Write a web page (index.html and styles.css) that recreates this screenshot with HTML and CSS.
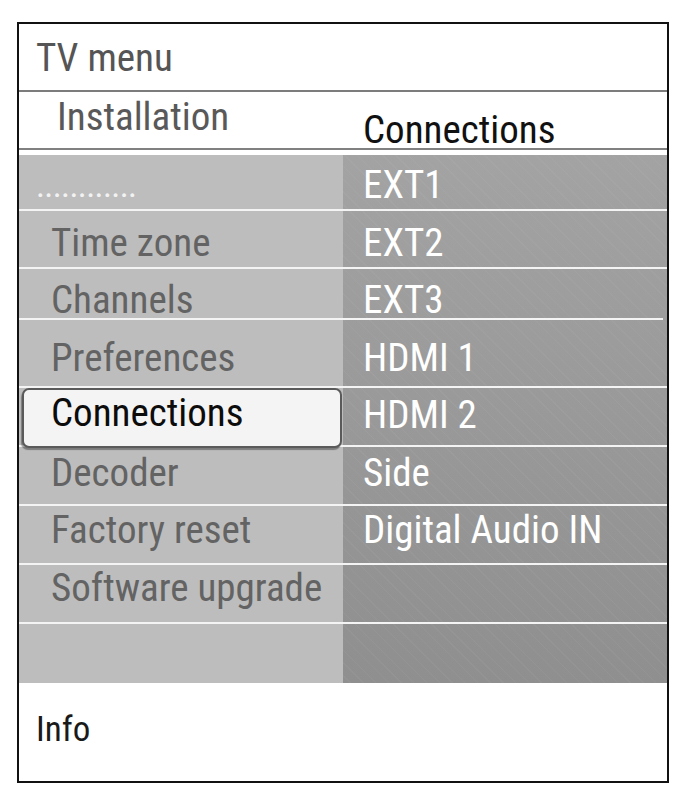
FILE: index.html
```html
<!DOCTYPE html>
<html lang="en">
<head>
    <meta charset="UTF-8" />
    <title>TV menu - Installation</title>
    <link rel="stylesheet" href="styles.css">
</head>
<body>

    <div class="tv-panel">
        <div class="menu-title">TV menu</div>

        <div class="crumbs">
            <span class="crumb-parent">Installation</span>
            <span class="crumb-current">Connections</span>
        </div>

        <div class="menu-list">
            <!-- separator lines, drawn behind the items -->
            <div class="lines">
                <div class="line-row"></div>
                <div class="line-row"></div>
                <div class="line-row short"></div>
                <div class="line-row"></div>
                <div class="line-row"></div>
                <div class="line-row"></div>
                <div class="line-row"></div>
                <div class="line-row"></div>
                <div class="line-row last"></div>
            </div>

            <div class="items">
                <div class="item-left dots">............</div>
                <div class="item-right">EXT1</div>

                <div class="item-left">Time zone</div>
                <div class="item-right">EXT2</div>

                <div class="item-left">Channels</div>
                <div class="item-right">EXT3</div>

                <div class="item-left">Preferences</div>
                <div class="item-right">HDMI 1</div>

                <div class="item-left selected">Connections</div>
                <div class="item-right">HDMI 2</div>

                <div class="item-left">Decoder</div>
                <div class="item-right">Side</div>

                <div class="item-left">Factory reset</div>
                <div class="item-right">Digital Audio IN</div>

                <div class="item-left">Software upgrade</div>
                <div class="item-right"></div>
            </div>
        </div>

        <div class="info">Info</div>
    </div>

</body>
</html>
```
FILE: styles.css
```css
* {
    margin: 0;
    padding: 0;
    box-sizing: border-box;
    font-family: 'Roboto Condensed', 'Roboto', sans-serif;
    font-stretch: condensed;
}
body {
    background: #ffffff;
    color: #111;
}

/* Outer frame */
.tv-panel {
    margin: 22px 0 0 17px;
    width: 652px;
    height: 761px;
    border: 2px solid #111;
    background: #fff;
    display: flex;
    flex-direction: column;
}

/* Header */
.menu-title {
    height: 68px;
    padding: 6px 0 0 17px;
    font-size: 39px;
    line-height: 57.5px;
    color: #555;
    border-bottom: 2px solid #7c7c7c;
}
.crumbs {
    height: 58px;
    display: flex;
    border-bottom: 2px solid #808080;
    margin-bottom: 5px;
    font-size: 39px;
    line-height: 50px;
}
.crumb-parent {
    width: 324px;
    padding-left: 38px;
    color: #595959;
}
.crumb-current {
    padding: 13px 0 0 20px;
    color: #111;
}

/* List area: lines layer and items layer stacked in one grid cell */
.menu-list {
    height: 528px;
    display: grid;
    background:
        linear-gradient(#bdbdbd, #bdbdbd) left top / 324px 100% no-repeat,
        repeating-linear-gradient(45deg, rgba(255, 255, 255, 0.035) 0 1px, transparent 1px 9px),
        linear-gradient(#a3a3a3, #8f8f8f);
}
.lines,
.items {
    grid-area: 1 / 1;
}
.lines {
    display: grid;
    grid-template-rows: 56px 58px 51px 68px 59px 59px 59px 59px 1fr;
}
.line-row {
    border-bottom: 2px solid #f4f4f4;
}
.line-row.short {
    margin-right: 4px;
}
.line-row.last {
    border-bottom: none;
}

.items {
    display: grid;
    grid-template-columns: 324px 1fr;
    grid-auto-rows: 57.5px;
    padding-top: 2px;
    font-size: 39px;
    line-height: 57.5px;
    white-space: nowrap;
}
.item-left {
    padding-left: 32px;
    color: #636363;
}
.item-right {
    padding-left: 20px;
    color: #fff;
}
.dots {
    padding-left: 17px;
    font-size: 34px;
    color: #f2f2f2;
    letter-spacing: -0.6px;
}

/* Highlighted entry */
.item-left.selected {
    align-self: start;
    height: 60px;
    margin: 1px 1px 0 3px;
    padding-left: 27px;
    line-height: 47px;
    color: #0c0c0c;
    background: #f4f4f4;
    border: 2px solid #5a5a5a;
    border-radius: 7px;
    box-shadow: -1px 2px 1px rgba(0, 0, 0, 0.35);
}

/* Footer */
.info {
    flex: 1;
    padding: 18px 0 0 17px;
    font-size: 35px;
    line-height: 57.5px;
    color: #1a1a1a;
}
```
